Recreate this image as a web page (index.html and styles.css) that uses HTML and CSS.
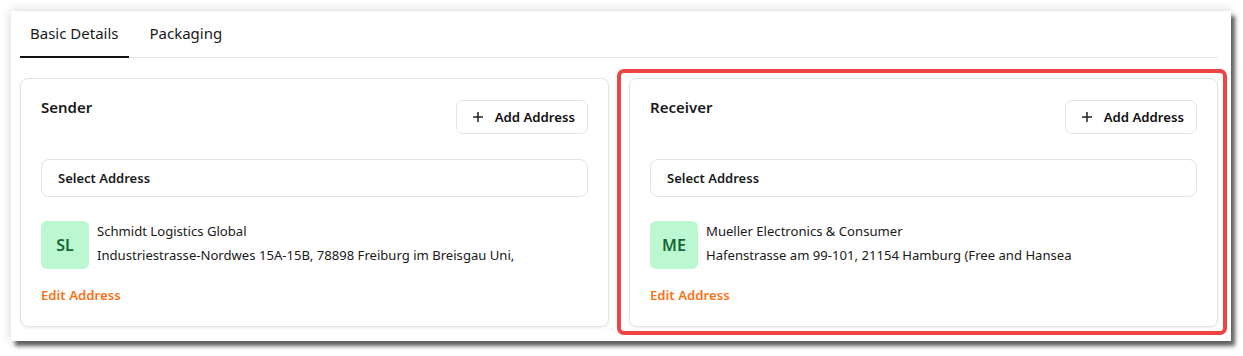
FILE: index.html
```html
<!doctype html>
<html lang="en">
  <head>
    <meta charset="UTF-8" />
    <meta name="viewport" content="width=device-width, initial-scale=1.0" />
    <title>Shipment Addresses</title>
    <link rel="stylesheet" href="styles.css">
  </head>
  <body>
    <div class="window">
      <div class="tabs">
        <div class="tab active">Basic Details</div>
        <div class="tab">Packaging</div>
      </div>

      <div class="cards">
        <div class="card">
          <div class="card-head">
            <div class="card-title">Sender</div>
            <button class="add-btn">
              <svg width="12" height="12" viewBox="0 0 12 12"><path d="M6 1v10M1 6h10" stroke="#222" stroke-width="1.5" /></svg>
              Add Address
            </button>
          </div>
          <div class="select">Select Address</div>
          <div class="address">
            <div class="avatar">SL</div>
            <div class="address-text">
              <div>Schmidt Logistics Global</div>
              <div>Industriestrasse-Nordwes 15A-15B, 78898 Freiburg im Breisgau Uni,</div>
            </div>
          </div>
          <a class="edit" href="#">Edit Address</a>
        </div>

        <div class="card highlighted">
          <div class="card-head">
            <div class="card-title">Receiver</div>
            <button class="add-btn">
              <svg width="12" height="12" viewBox="0 0 12 12"><path d="M6 1v10M1 6h10" stroke="#222" stroke-width="1.5" /></svg>
              Add Address
            </button>
          </div>
          <div class="select">Select Address</div>
          <div class="address">
            <div class="avatar">ME</div>
            <div class="address-text">
              <div>Mueller Electronics &amp; Consumer</div>
              <div>Hafenstrasse am 99-101, 21154 Hamburg (Free and Hansea</div>
            </div>
          </div>
          <a class="edit" href="#">Edit Address</a>
        </div>
      </div>
    </div>
  </body>
</html>
```

FILE: styles.css
```css
body {
  margin: 0;
  height: 356px;
  box-sizing: border-box;
  padding: 11px 12px 0 11px;
  background: #fff;
  font-family: "Noto Sans", "Open Sans", sans-serif;
  color: #1a1a1a;
}
.window {
  background: #fff;
  height: 330px;
  box-sizing: border-box;
  padding: 8px 13px 14px 9px;
  box-shadow: 4px 5px 4px rgba(0, 0, 0, .6), 0 0 10px rgba(0, 0, 0, .18);
}
.tabs {
  display: flex;
  gap: 11px;
  border-bottom: 1px solid #e5e5e5;
}
.tab {
  padding: 4px 10px 13px;
  font-size: 15px;
  line-height: 20px;
  margin-bottom: -1px;
  border-bottom: 2px solid transparent;
}
.tab.active {
  border-bottom-color: #111;
}
.cards {
  display: grid;
  grid-template-columns: 1fr 1fr;
  gap: 20px;
  margin-top: 20px;
}
.card {
  position: relative;
  border: 1px solid #e3e3e3;
  border-radius: 8px;
  padding: 21px 20px 21px;
  box-shadow: 0 1px 3px rgba(0, 0, 0, .08);
  display: flex;
  flex-direction: column;
}
.card.highlighted::after {
  content: "";
  position: absolute;
  top: -10px;
  left: -13px;
  right: -10px;
  bottom: -9px;
  border: 4px solid #ef4444;
  border-radius: 7px;
  pointer-events: none;
}
.card-head {
  display: flex;
  justify-content: space-between;
  align-items: flex-start;
}
.card-title {
  font-size: 15px;
  font-weight: 600;
  line-height: 14px;
}
.add-btn {
  display: flex;
  align-items: center;
  gap: 11px;
  height: 34px;
  padding: 0 12px 0 15px;
  background: #fff;
  border: 1px solid #e3e3e3;
  border-radius: 7px;
  font-family: inherit;
  font-size: 13.2px;
  font-weight: 600;
  color: #111;
}
.select {
  margin-top: 25px;
  height: 38px;
  box-sizing: border-box;
  border: 1px solid #e3e3e3;
  border-radius: 8px;
  padding: 0 16px;
  display: flex;
  align-items: center;
  font-size: 13px;
  font-weight: 600;
}
.address {
  display: flex;
  gap: 8px;
  margin-top: 24px;
}
.avatar {
  width: 48px;
  height: 48px;
  flex: none;
  border-radius: 6px;
  background: #bbf7d0;
  color: #166534;
  font-size: 16px;
  font-weight: 600;
  display: flex;
  align-items: center;
  justify-content: center;
}
.address-text {
  font-size: 13.1px;
  line-height: 20px;
  display: flex;
  flex-direction: column;
  gap: 4px;
  white-space: nowrap;
}
.edit {
  margin-top: 16px;
  font-size: 13.2px;
  line-height: 20px;
  font-weight: 600;
  color: #f97316;
  text-decoration: none;
}
```
